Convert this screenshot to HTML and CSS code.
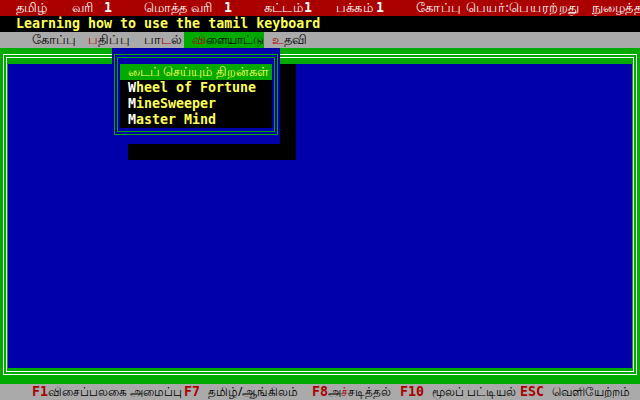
FILE: index.html
```html
<!DOCTYPE html>
<html lang="ta">
<head>
<meta charset="utf-8">
<title>Tamil editor</title>
<link rel="stylesheet" href="styles.css">
</head>
<body>
<div class="screen">
  <div class="row status">
    <span class="ta st-lang">தமிழ்</span>
    <span class="ta st-line">வரி</span>
    <span class="num st-line-n">1</span>
    <span class="ta st-total">மொத்த வரி</span>
    <span class="num st-total-n">1</span>
    <span class="ta st-cell">கட்டம்</span>
    <span class="num st-cell-n">1</span>
    <span class="ta st-page">பக்கம்</span>
    <span class="num st-page-n">1</span>
    <span class="ta st-file">கோப்பு பெயர்:பெயரற்றது</span>
    <span class="ta st-mode">நுழைத்தல்</span>
  </div>
  <div class="row title">
    <span class="title-text">Learning how to use the tamil keyboard</span>
  </div>
  <div class="row menubar">
    <span class="ta mb-file">கோப்பு</span>
    <span class="ta mb-edit"><b class="hot">ப</b>திப்பு</span>
    <span class="ta mb-lesson">பா<b class="hot">ட</b>ல்</span>
    <span class="ta mb-games active"><b class="hot">வி</b>ளையாட்டு</span>
    <span class="ta mb-help"><b class="hot">உ</b>தவி</span>
  </div>
  <div class="frame">
    <div class="frame-outer">
      <div class="frame-inner">
        <div class="workspace"></div>
      </div>
    </div>
    <div class="popup">
      <div class="pop-outer">
        <div class="pop-inner">
          <ul class="pop-list">
            <li class="pop-item selected"><span class="ta">டைப் செய்யும் திறன்கள்</span></li>
            <li class="pop-item"><span class="first">W</span>heel of Fortune</li>
            <li class="pop-item"><span class="first">M</span>ineSweeper</li>
            <li class="pop-item"><span class="first">M</span>aster Mind</li>
          </ul>
        </div>
      </div>
    </div>
  </div>
  <div class="row fkeys">
    <span class="key fk-1">F1</span>
    <span class="ta fk-1t">விசைப்பலகை அமைப்பு</span>
    <span class="key fk-7">F7</span>
    <span class="ta fk-7t">தமிழ்/ஆங்கிலம்</span>
    <span class="key fk-8">F8</span>
    <span class="ta fk-8t">அ<b class="hot">ச்</b>சடித்தல்</span>
    <span class="key fk-10">F10</span>
    <span class="ta fk-10t">மூலப் பட்டியல்</span>
    <span class="key fk-esc">ESC</span>
    <span class="ta fk-esct">வெளியேற்றம்</span>
  </div>
</div>
</body>
</html>
```

FILE: styles.css
```css
* { box-sizing: border-box; }
html, body { margin: 0; padding: 0; background: #000; }
body { width: 640px; height: 400px; overflow: hidden; }

.screen {
  width: 640px;
  height: 400px;
  display: flex;
  flex-direction: column;
  font-family: "DejaVu Sans Mono", monospace;
  font-weight: bold;
  font-size: 13.3px;
  line-height: 16px;
  position: relative;
}

.row {
  height: 16px;
  display: grid;
  grid-template-columns: repeat(80, 8px);
  white-space: nowrap;
  overflow: hidden;
}

.ta {
  font-family: "Noto Sans", sans-serif;
  font-weight: normal;
  font-size: 12.5px;
  letter-spacing: 0.2px;
  line-height: 16px;
}
.hot { font-weight: normal; color: #aa0000; }

/* status bar */
.status { background: #aa0000; color: #fff; }
.st-lang { grid-column: 3 / span 6; }
.st-line { grid-column: 10 / span 4; }
.st-line-n { grid-column: 14 / span 2; }
.st-total { grid-column: 19 / span 10; }
.st-total-n { grid-column: 29 / span 2; }
.st-cell { grid-column: 34 / span 5; }
.st-cell-n { grid-column: 39 / span 2; }
.st-page { grid-column: 43 / span 5; }
.st-page-n { grid-column: 48 / span 2; }
.st-file { grid-column: 53 / span 22; letter-spacing: 0.6px; }
.st-mode { grid-column: 75 / span 6; }

/* title */
.title { background: #000; color: #ffff55; }
.title-text { grid-column: 3 / span 40; }

/* menu bar */
.menubar { background: #aaaaaa; color: #000; }
.mb-file { grid-column: 5 / span 6; }
.mb-edit { grid-column: 12 / span 6; }
.mb-lesson { grid-column: 19 / span 5; }
.mb-games { grid-column: 24 / span 10; padding-left: 8px; font-size: 12px; letter-spacing: -0.3px; }
.mb-help { grid-column: 35 / span 5; }
.active { background: #00aa00; }

/* main frame */
.frame {
  height: 336px;
  background: #00aa00;
  padding: 6px 3px 9px 3px;
  position: relative;
}
.frame-outer {
  height: 100%;
  border: 1px solid #fff;
  padding: 2px;
}
.frame-inner {
  height: 100%;
  border: 1px solid #fff;
  padding: 6px 1px 3px 1px;
}
.workspace {
  height: 100%;
  background: #0000aa;
}

/* popup menu */
.popup {
  position: absolute;
  left: 112px;
  top: 0;
  width: 168px;
  height: 96px;
  background: #0000aa;
  box-shadow: 16px 16px 0 #000;
  padding: 6px 2px 9px 2px;
}
.pop-outer {
  height: 100%;
  border: 1px solid #00aa00;
  padding: 2px;
}
.pop-inner {
  height: 100%;
  border: 1px solid #00aa00;
  padding: 6px 2px 3px 2px;
}
.pop-list {
  list-style: none;
  margin: 0;
  padding: 0;
  background: #000;
  height: 64px;
}
.pop-item {
  height: 16px;
  padding-left: 8px;
  color: #ffff55;
  white-space: nowrap;
}
.pop-item .first { color: #fff; }
.pop-item.selected { background: #00aa00; color: #ffff55; }
.pop-item.selected .ta { letter-spacing: 0; font-size: 12.5px; }

/* function keys */
.fkeys { background: #aaaaaa; color: #000; }
.fkeys .ta { letter-spacing: 0; font-size: 12px; }
.key { color: #aa0000; }
.fk-1 { grid-column: 5 / span 2; }
.fk-1t { grid-column: 7 / span 16; }
.fk-7 { grid-column: 24 / span 2; }
.fk-7t { grid-column: 27 / span 12; }
.fk-8 { grid-column: 40 / span 2; }
.fk-8t { grid-column: 42 / span 8; }
.fk-10 { grid-column: 51 / span 3; }
.fk-10t { grid-column: 55 / span 10; }
.fk-esc { grid-column: 66 / span 3; }
.fk-esct { grid-column: 70 / span 11; }
```
